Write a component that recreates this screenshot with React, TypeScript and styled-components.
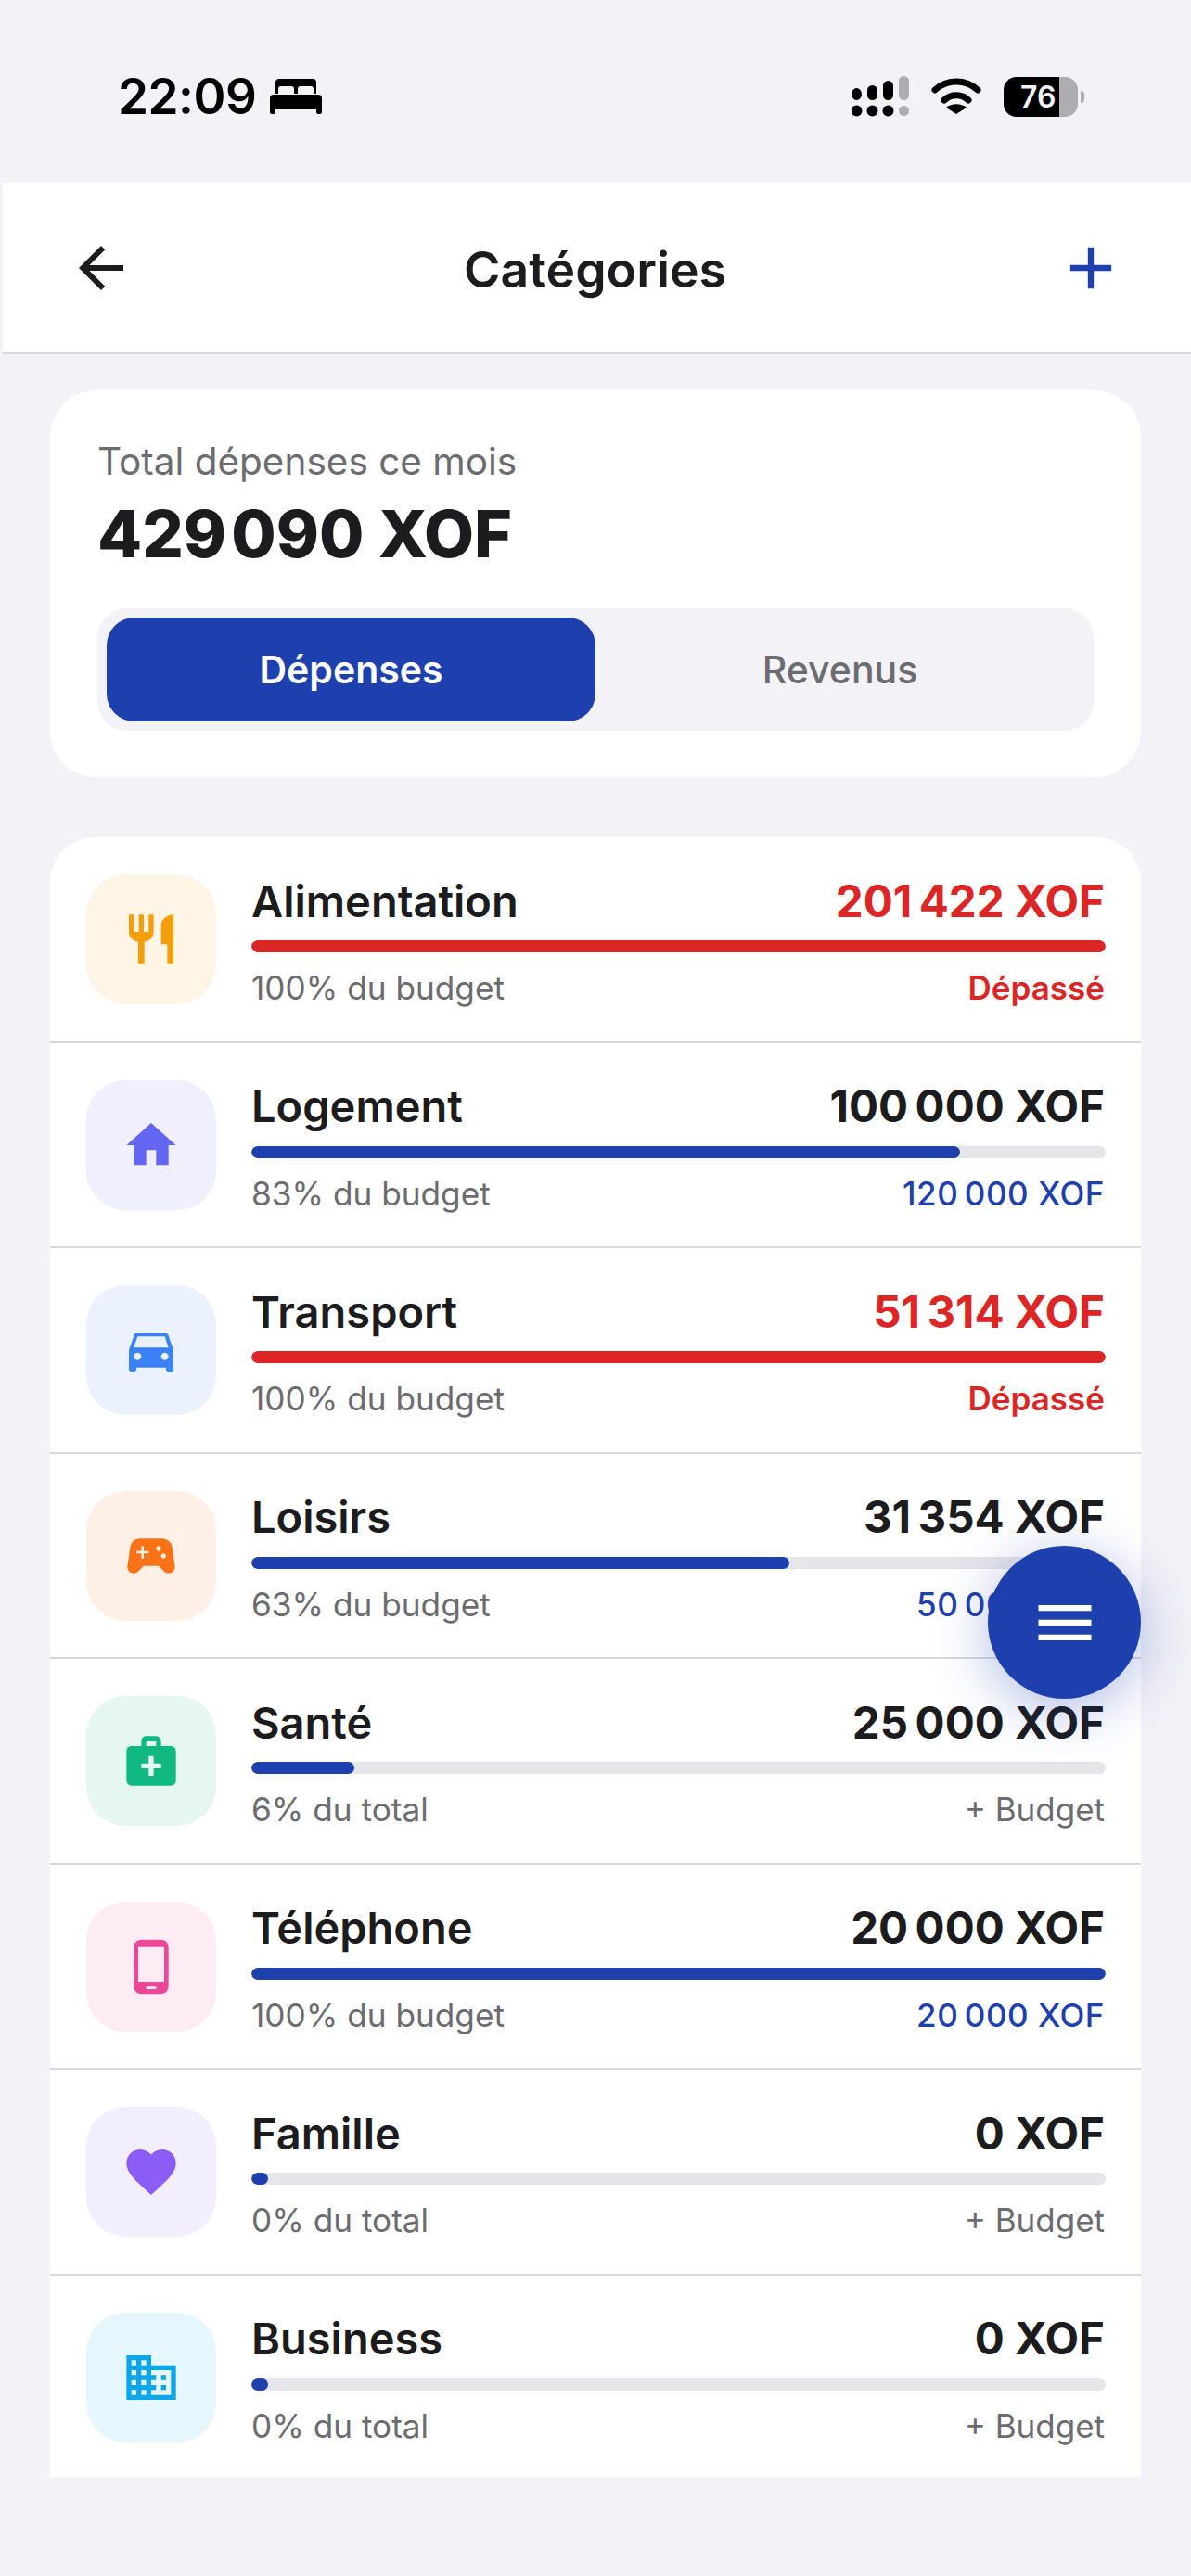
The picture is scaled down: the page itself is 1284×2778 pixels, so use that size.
import React from "react";
import styled, { createGlobalStyle } from "styled-components";
import {
  MdRestaurant,
  MdHome,
  MdDirectionsCar,
  MdSportsEsports,
  MdMedicalServices,
  MdPhoneAndroid,
  MdFavorite,
  MdBusiness,
  MdArrowBack,
  MdAdd,
  MdMenu,
} from "react-icons/md";

const GlobalStyle = createGlobalStyle`
  html, body { margin: 0; padding: 0; background: #f2f2f7; }
  body { font-family: Inter, "Liberation Sans", sans-serif; }
  * { box-sizing: border-box; }
`;

const Page = styled.div`
  position: relative;
  width: 1284px;
  height: 2778px;
  overflow: hidden;
  background: #f2f2f7;
`;

const StatusBar = styled.div`
  height: 197px;
  padding: 82px 115px 0 127px;
  display: flex;
  justify-content: space-between;
  align-items: flex-start;
`;

const StatusLeft = styled.div`
  display: flex;
  align-items: center;
  gap: 15px;
`;

const Time = styled.span`
  font-size: 53px;
  line-height: 44px;
  font-weight: 600;
  color: #000;
  letter-spacing: -0.5px;
`;

const StatusRight = styled.div`
  display: flex;
  align-items: center;
  gap: 24px;
`;

const Battery = styled.div`
  width: 80px;
  height: 43px;
  border-radius: 14px;
  background: linear-gradient(90deg, #000 0 60px, #aeaeb2 60px);
  color: #f2f2f7;
  font-size: 32px;
  font-weight: 600;
  line-height: 43px;
  padding-left: 18px;
`;

const BatteryWrap = styled.div`
  display: flex;
  align-items: center;
  gap: 3px;
`;

const BatteryTip = styled.div`
  width: 4px;
  height: 13px;
  background: #aeaeb2;
  border-radius: 0 6px 6px 0;
`;

const Header = styled.header`
  height: 185px;
  margin-left: 3px;
  padding: 0 70px 0 70px;
  background: #fff;
  border-bottom: 2px solid #d8d8dc;
  display: flex;
  align-items: center;
  justify-content: space-between;
`;

const Title = styled.h1`
  margin: 3px 0 0;
  font-size: 53.5px;
  font-weight: 600;
  color: #1c1c1e;
`;

const HeaderIcon = styled.span<{ $color: string }>`
  display: flex;
  color: ${(p) => p.$color};
`;

const Content = styled.main`
  padding: 39px 54px 0;
  display: flex;
  flex-direction: column;
  gap: 65px;
`;

const SummaryCard = styled.section`
  height: 417px;
  background: #fff;
  border-radius: 50px;
  padding: 53px 51px 0;
`;

const SummaryLabel = styled.div`
  font-size: 40.5px;
  line-height: 48px;
  color: #6c6c70;
`;

const SummaryValue = styled.div`
  margin-top: 12px;
  font-size: 70px;
  line-height: 84px;
  font-weight: 800;
  color: #1c1c1e;
`;

const Tabs = styled.div`
  margin-top: 38px;
  height: 132px;
  border-radius: 32px;
  background: #f2f2f7;
  padding: 10px;
  display: grid;
  grid-template-columns: 1fr 1fr;
`;

const Tab = styled.div<{ $active?: boolean }>`
  display: flex;
  align-items: center;
  justify-content: center;
  border-radius: 30px;
  font-size: 41px;
  font-weight: ${(p) => (p.$active ? 600 : 500)};
  background: ${(p) => (p.$active ? "#1e40af" : "transparent")};
  color: ${(p) => (p.$active ? "#fff" : "#6c6c70")};
`;

const ListCard = styled.section`
  background: #fff;
  border-radius: 48px 48px 0 0;
  overflow: hidden;
`;

const Row = styled.div`
  height: 221.5px;
  padding: 40px 38px 0 39px;
  display: flex;
  gap: 38px;
  border-bottom: 2px solid #d8d8dc;
  &:last-child {
    height: 217px;
    border-bottom: none;
  }
`;

const IconBox = styled.div<{ $bg: string; $color: string }>`
  flex: none;
  width: 140px;
  height: 140px;
  border-radius: 42px;
  background: ${(p) => p.$bg};
  color: ${(p) => p.$color};
  display: flex;
  align-items: center;
  justify-content: center;
`;

const RowBody = styled.div`
  flex: 1;
  min-width: 0;
  display: flex;
  flex-direction: column;
`;

const RowTop = styled.div`
  display: flex;
  justify-content: space-between;
  align-items: center;
  height: 56px;
  padding-right: 1px;
`;

const RowName = styled.span`
  font-size: 47px;
  font-weight: 600;
  color: #1c1c1e;
`;

const RowAmount = styled.span<{ $over?: boolean }>`
  font-size: 47.5px;
  font-weight: 700;
  color: ${(p) => (p.$over ? "#dc2626" : "#1c1c1e")};
`;

const Track = styled.div`
  margin-top: 15px;
  height: 13px;
  border-radius: 7px;
  background: #e5e5ea;
  overflow: hidden;
`;

const Fill = styled.div<{ $over?: boolean }>`
  height: 100%;
  border-radius: 7px;
  background: ${(p) => (p.$over ? "#dc2626" : "#1e40af")};
`;

const RowBottom = styled.div`
  margin-top: 14px;
  padding-right: 1px;
  display: flex;
  justify-content: space-between;
  align-items: center;
  height: 48px;
`;

const RowNote = styled.span`
  font-size: 35.2px;
  color: #6c6c70;
`;

const RowStatus = styled.span<{ $kind: "over" | "budget" | "add" }>`
  font-size: 35px;
  font-weight: ${(p) => (p.$kind === "add" ? 400 : p.$kind === "budget" ? 500 : 600)};
  letter-spacing: ${(p) => (p.$kind === "budget" ? "0.5px" : "0")};
  color: ${(p) =>
    p.$kind === "over" ? "#dc2626" : p.$kind === "budget" ? "#1e40af" : "#6c6c70"};
`;

const Fab = styled.button`
  position: absolute;
  left: 1065px;
  top: 1667px;
  width: 165px;
  height: 165px;
  padding: 0;
  border: none;
  border-radius: 50%;
  background: #1e40af;
  color: #fff;
  display: flex;
  align-items: center;
  justify-content: center;
  box-shadow: 0 12px 60px rgba(30, 64, 175, 0.35);
`;

const BedIcon = () => (
  <svg width="56" height="38" viewBox="0 0 56 38" fill="#000">
    <path d="M6 3a4 4 0 0 1 4-3h36a4 4 0 0 1 4 3v13h-3V11a3 3 0 0 0-3-3H33a3 3 0 0 0-3 3v5h-4v-5a3 3 0 0 0-3-3H12a3 3 0 0 0-3 3v5H6z" />
    <path d="M4 17h48a4 4 0 0 1 4 4v12H0V21a4 4 0 0 1 4-4z" />
    <rect x="0" y="32" width="6" height="6" rx="2" />
    <rect x="50" y="32" width="6" height="6" rx="2" />
  </svg>
);

const SignalIcon = () => (
  <svg width="62" height="44" viewBox="0 0 62 44">
    <ellipse cx="5.5" cy="19.5" rx="5.5" ry="6.5" fill="#000" />
    <rect x="17" y="10" width="11" height="16" rx="5.5" fill="#000" />
    <rect x="34" y="5" width="11" height="21" rx="5.5" fill="#000" />
    <rect x="51" y="0" width="11" height="26" rx="5.5" fill="#aeaeb2" />
    <circle cx="5.5" cy="37.5" r="6" fill="#000" />
    <circle cx="22.5" cy="37.5" r="6" fill="#000" />
    <circle cx="39.5" cy="37.5" r="6" fill="#000" />
    <circle cx="56.5" cy="37.5" r="5.5" fill="#aeaeb2" />
  </svg>
);

const WifiIcon = () => (
  <svg width="54" height="40" viewBox="0 0 54 40" fill="none" stroke="#000" strokeWidth="7" strokeLinecap="round">
    <path d="M4 13C17 1 37 1 50 13" />
    <path d="M14 24C21 17 33 17 40 24" />
    <path d="M27 39l-11-7c6-5 16-5 22 0z" fill="#000" stroke="none" />
  </svg>
);

type Cat = {
  name: string;
  amount: string;
  note: string;
  status: string;
  kind: "over" | "budget" | "add";
  pct: number;
  Icon: React.ComponentType<{ size?: number }>;
  bg: string;
  color: string;
  over?: boolean;
};

const T = "\u2009";
const H = "\u200A";

const cats: Cat[] = [
  { name: "Alimentation", amount: `201${T}422 XOF`, note: "100% du budget", status: "Dépassé", kind: "over", pct: 100, Icon: MdRestaurant, bg: "#fef5e7", color: "#f59e0b", over: true },
  { name: "Logement", amount: `100${T}000 XOF`, note: "83% du budget", status: `120${T}000 XOF`, kind: "budget", pct: 83, Icon: MdHome, bg: "#efeffd", color: "#6366f1" },
  { name: "Transport", amount: `51${T}314 XOF`, note: "100% du budget", status: "Dépassé", kind: "over", pct: 100, Icon: MdDirectionsCar, bg: "#ebf2fe", color: "#3b82f6", over: true },
  { name: "Loisirs", amount: `31${T}354 XOF`, note: "63% du budget", status: `50${T}000 XOF`, kind: "budget", pct: 63, Icon: MdSportsEsports, bg: "#feefe7", color: "#f97316" },
  { name: "Santé", amount: `25${T}000 XOF`, note: "6% du total", status: "+ Budget", kind: "add", pct: 12, Icon: MdMedicalServices, bg: "#e6f7f1", color: "#10b981" },
  { name: "Téléphone", amount: `20${T}000 XOF`, note: "100% du budget", status: `20${T}000 XOF`, kind: "budget", pct: 100, Icon: MdPhoneAndroid, bg: "#fdecf4", color: "#ec4899" },
  { name: "Famille", amount: "0 XOF", note: "0% du total", status: "+ Budget", kind: "add", pct: 2, Icon: MdFavorite, bg: "#f3eefe", color: "#8b5cf6" },
  { name: "Business", amount: "0 XOF", note: "0% du total", status: "+ Budget", kind: "add", pct: 2, Icon: MdBusiness, bg: "#e6f6fd", color: "#0ea5e9" },
];

export default function App() {
  return (
    <Page>
      <GlobalStyle />
      <StatusBar>
        <StatusLeft>
          <Time>22:09</Time>
          <BedIcon />
        </StatusLeft>
        <StatusRight>
          <SignalIcon />
          <WifiIcon />
          <BatteryWrap>
            <Battery>76</Battery>
            <BatteryTip />
          </BatteryWrap>
        </StatusRight>
      </StatusBar>
      <Header>
        <HeaderIcon $color="#1c1c1e"><MdArrowBack size={72} /></HeaderIcon>
        <Title>Catégories</Title>
        <HeaderIcon $color="#1e40af"><MdAdd size={76} /></HeaderIcon>
      </Header>
      <Content>
        <SummaryCard>
          <SummaryLabel>Total dépenses ce mois</SummaryLabel>
          <SummaryValue>{`429${H}090 XOF`}</SummaryValue>
          <Tabs>
            <Tab $active>Dépenses</Tab>
            <Tab>Revenus</Tab>
          </Tabs>
        </SummaryCard>
        <ListCard>
          {cats.map((c) => (
            <Row key={c.name}>
              <IconBox $bg={c.bg} $color={c.color}>
                <c.Icon size={64} />
              </IconBox>
              <RowBody>
                <RowTop>
                  <RowName>{c.name}</RowName>
                  <RowAmount $over={c.over}>{c.amount}</RowAmount>
                </RowTop>
                <Track>
                  <Fill $over={c.over} style={{ width: `${c.pct}%` }} />
                </Track>
                <RowBottom>
                  <RowNote>{c.note}</RowNote>
                  <RowStatus $kind={c.kind}>{c.status}</RowStatus>
                </RowBottom>
              </RowBody>
            </Row>
          ))}
        </ListCard>
      </Content>
      <Fab aria-label="Menu">
        <MdMenu size={76} />
      </Fab>
    </Page>
  );
}
